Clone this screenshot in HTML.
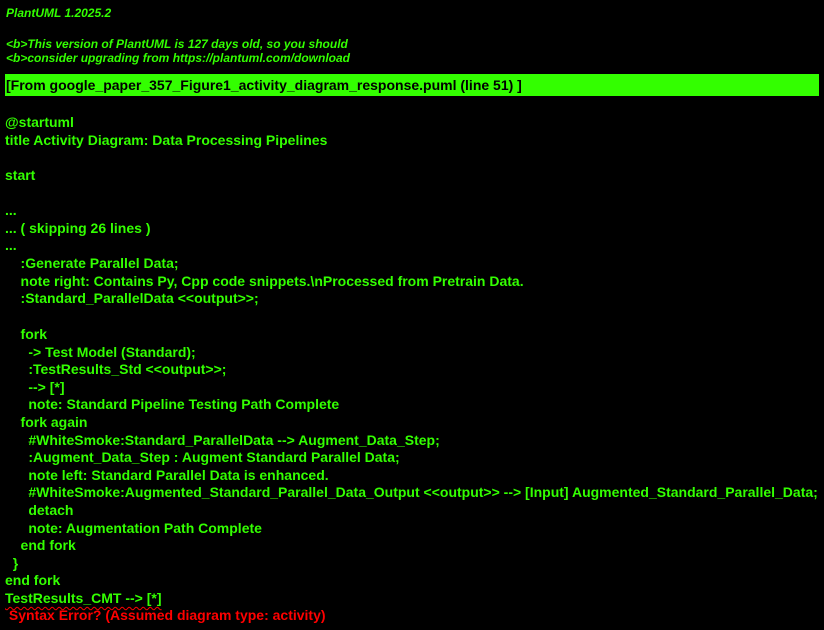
<!DOCTYPE html>
<html><head><meta charset="utf-8"><style>
html,body{margin:0;padding:0;background:#000;width:824px;height:630px;overflow:hidden}
div{position:absolute;white-space:pre;font-family:"Liberation Sans",Arial,sans-serif;font-weight:bold;color:#33ff00;font-size:14px;line-height:18px;height:18px}
.i{font-style:italic;font-size:12px;line-height:14px;height:14px}
.box{background:#33ff00;color:#000;left:5px;width:814px;top:74px;height:22px;line-height:22px;padding-left:1px;box-sizing:border-box}
.r{color:#ff0000}
.u{text-decoration:underline wavy #ff0000;text-decoration-thickness:1px;text-underline-offset:3px}
</style></head><body>
<div class="i" style="left:6px;top:6px">PlantUML 1.2025.2</div>
<div class="i" style="left:6px;top:37px">&lt;b&gt;This version of PlantUML is 127 days old, so you should</div>
<div class="i" style="left:6px;top:51px">&lt;b&gt;consider upgrading from https://plantuml.com/download</div>
<div class="box">[From google_paper_357_Figure1_activity_diagram_response.puml (line 51) ]</div>
<div style="left:5px;top:113px">@startuml</div>
<div style="left:5px;top:131px">title Activity Diagram: Data Processing Pipelines</div>
<div style="left:5px;top:166px">start</div>
<div style="left:5px;top:201px">...</div>
<div style="left:5px;top:219px">... ( skipping 26 lines )</div>
<div style="left:5px;top:236px">...</div>
<div style="left:5px;top:254px">    :Generate Parallel Data;</div>
<div style="left:5px;top:272px">    note right: Contains Py, Cpp code snippets.\nProcessed from Pretrain Data.</div>
<div style="left:5px;top:289px">    :Standard_ParallelData &lt;&lt;output&gt;&gt;;</div>
<div style="left:5px;top:325px">    fork</div>
<div style="left:5px;top:343px">      -&gt; Test Model (Standard);</div>
<div style="left:5px;top:360px">      :TestResults_Std &lt;&lt;output&gt;&gt;;</div>
<div style="left:5px;top:378px">      --&gt; [*]</div>
<div style="left:5px;top:395px">      note: Standard Pipeline Testing Path Complete</div>
<div style="left:5px;top:413px">    fork again</div>
<div style="left:5px;top:431px">      #WhiteSmoke:Standard_ParallelData --&gt; Augment_Data_Step;</div>
<div style="left:5px;top:448px">      :Augment_Data_Step : Augment Standard Parallel Data;</div>
<div style="left:5px;top:466px">      note left: Standard Parallel Data is enhanced.</div>
<div style="left:5px;top:483px">      #WhiteSmoke:Augmented_Standard_Parallel_Data_Output &lt;&lt;output&gt;&gt; --&gt; [Input] Augmented_Standard_Parallel_Data;</div>
<div style="left:5px;top:501px">      detach</div>
<div style="left:5px;top:519px">      note: Augmentation Path Complete</div>
<div style="left:5px;top:536px">    end fork</div>
<div style="left:5px;top:554px">  }</div>
<div style="left:5px;top:571px">end fork</div>
<div class="u" style="left:5px;top:589px">TestResults_CMT --&gt; [*]</div>
<div class="r" style="left:5px;top:606px"> Syntax Error? (Assumed diagram type: activity)</div>
</body></html>
